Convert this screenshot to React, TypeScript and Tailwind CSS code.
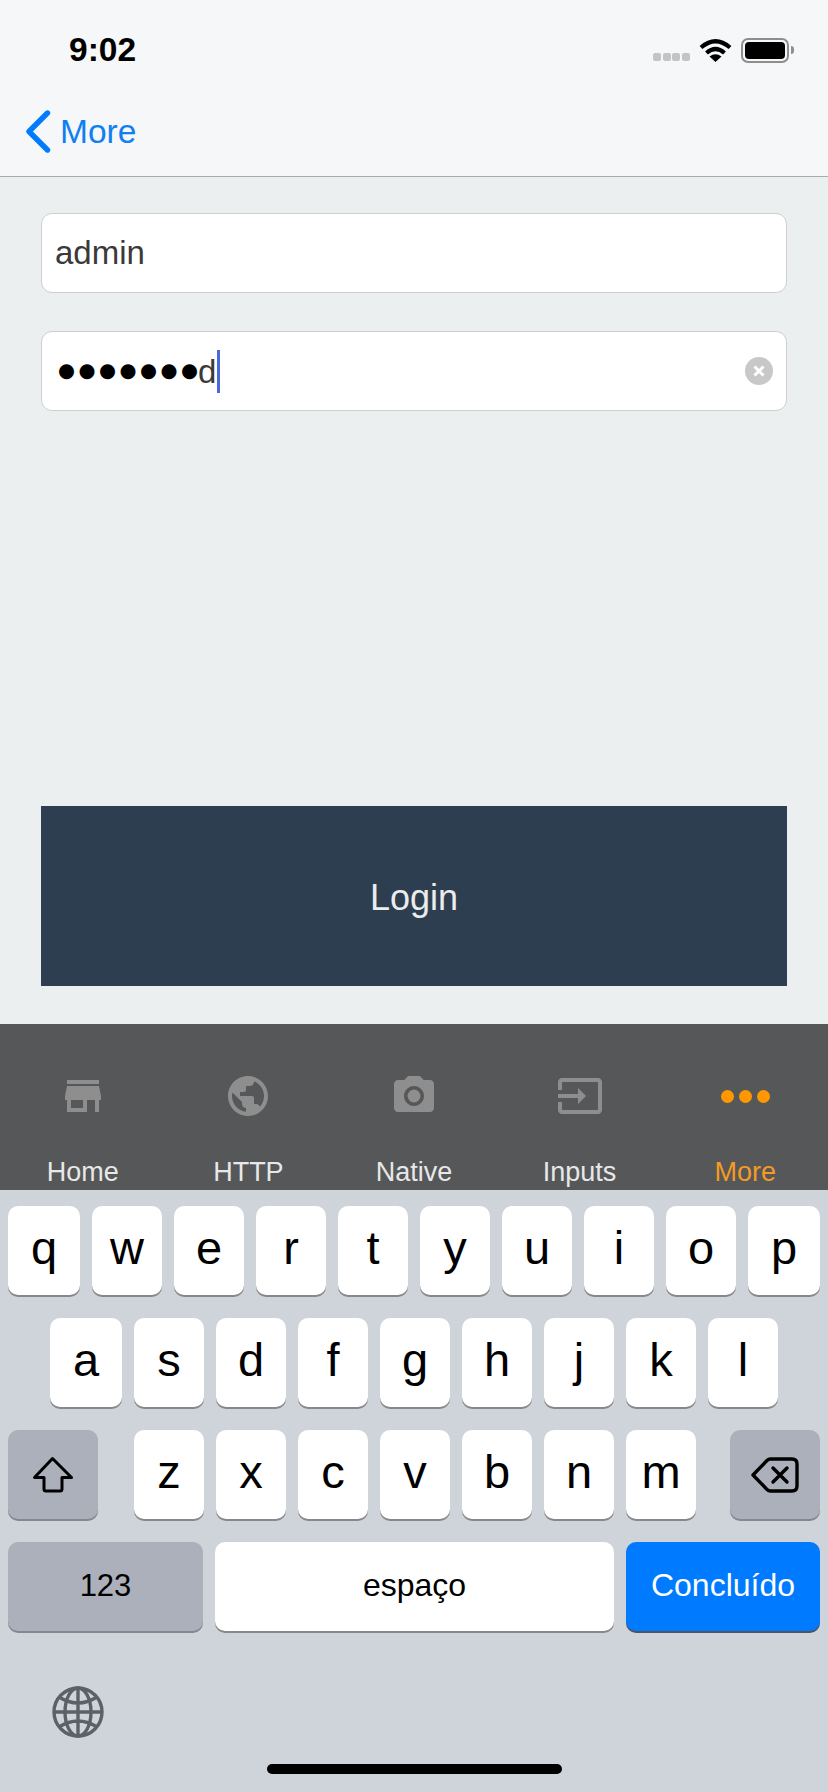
import React, { FC } from "react";

const ROW_ONE = ["w", "e", "r", "t", "y", "u", "i", "o"];
const ROW_TWO = ["s", "d", "f", "g", "h", "j", "k", "l"];
const ROW_THREE = ["z", "x", "c", "v", "b", "n", "m"];

const TABS = [
  {
    label: "Home",
    path: "M20 4H4v2h16V4zm1 10v-2l-1-5H4l-1 5v2h1v6h10v-6h4v6h2v-6h1zm-9 4H6v-4h6v4z",
  },
  {
    label: "HTTP",
    path: "M12 2C6.48 2 2 6.48 2 12s4.48 10 10 10 10-4.48 10-10S17.52 2 12 2zm-1 17.93c-3.95-.49-7-3.85-7-7.93 0-.62.08-1.21.21-1.79L9 15v1c0 1.1.9 2 2 2v1.93zm6.9-2.54c-.26-.81-1-1.39-1.9-1.39h-1v-3c0-.55-.45-1-1-1H8v-2h2c.55 0 1-.45 1-1V7h2c1.1 0 2-.9 2-2v-.41c2.93 1.19 5 4.06 5 7.41 0 2.08-.8 3.97-2.1 5.39z",
  },
  {
    label: "Native",
    path: "M9 2L7.17 4H4c-1.1 0-2 .9-2 2v12c0 1.1.9 2 2 2h16c1.1 0 2-.9 2-2V6c0-1.1-.9-2-2-2h-3.17L15 2H9zm3 15c-2.76 0-5-2.24-5-5s2.24-5 5-5 5 2.24 5 5-2.24 5-5 5zm0-8.2a3.2 3.2 0 1 0 0 6.4 3.2 3.2 0 0 0 0-6.4z",
  },
  {
    label: "Inputs",
    path: "M21 3.01H3c-1.1 0-2 .9-2 2V9h2V4.99h18v14.03H3V15H1v4.01c0 1.1.9 1.98 2 1.98h18c1.1 0 2-.88 2-1.98v-14c0-1.11-.9-2-2-2zM11 16l4-4-4-4v3H1v2h10v3z",
  },
];

const StatusBar = () => (
  <div className="h-[88px] flex items-center justify-between pl-[69px] pr-[34px] pt-[12px]">
    <span className="text-[33.5px] leading-none font-bold text-black">9:02</span>
    <div className="flex items-center">
      <div className="flex gap-[1.6px] mt-[14px] mr-[9px]">
        <div className="w-[8px] h-[8px] rounded-[2px] bg-[#c4c4c6]"></div>
        <div className="w-[8px] h-[8px] rounded-[2px] bg-[#c4c4c6]"></div>
        <div className="w-[8px] h-[8px] rounded-[2px] bg-[#c4c4c6]"></div>
        <div className="w-[8px] h-[8px] rounded-[2px] bg-[#c4c4c6]"></div>
      </div>
      <svg width="33" height="24" viewBox="0 0 33 24" className="mr-[9px]">
        <path d="M2 9.5Q16.5-3 31 9.5" fill="none" stroke="#000" strokeWidth="4.2" />
        <path d="M7.5 15Q16.5 7 25.5 15" fill="none" stroke="#000" strokeWidth="4.2" />
        <path d="M16.5 24L10.5 18.5Q16.5 14 22.5 18.5Z" fill="#000" />
      </svg>
      <div className="w-[48px] h-[25px] rounded-[7px] border-2 border-[#8e8e90] p-[2px]">
        <div className="w-full h-full rounded-[4px] bg-black"></div>
      </div>
      <div className="w-[3px] h-[8px] ml-[2px] rounded-r-full bg-[#8e8e90]"></div>
    </div>
  </div>
);

const NavBar = () => (
  <div className="h-[89px] flex items-start pl-[25px] pt-[22px] border-b border-[#a9abac]">
    <svg width="26" height="43" viewBox="0 0 26 43">
      <path
        d="M22.5 3L4 21.5 22.5 40"
        fill="none"
        stroke="#007aff"
        strokeWidth="5.4"
        strokeLinecap="round"
        strokeLinejoin="round"
      />
    </svg>
    <span className="ml-[9px] mt-[4px] text-[33.5px] leading-[36px] text-[#107fef]">More</span>
  </div>
);

const LoginForm = () => (
  <div className="flex-1 flex flex-col bg-[#ebeff0] px-[41px] pt-[36px] pb-[38px]">
    <div className="h-[80px] flex items-center pl-[13px] rounded-[11px] border border-[#cdcfd0] bg-white">
      <span className="text-[33px] leading-none text-[#3a3a3a] mb-[2px]">admin</span>
    </div>
    <div className="h-[80px] mt-[38px] flex items-center pl-[16px] pr-[13px] rounded-[11px] border border-[#cdcfd0] bg-white">
      <span className="text-[19.5px] leading-none text-black font-['DejaVu_Sans',sans-serif]">
        <span className="tracking-[3.5px]">●●●●●●</span>●
      </span>
      <span className="text-[33px] leading-none text-[#3a3a3a] mt-[1px]">d</span>
      <div className="w-[3px] h-[43px] ml-[1px] mt-[1px] bg-[#4a68d8]"></div>
      <div className="ml-auto w-[28px] h-[28px] rounded-full bg-[#c8c8c8] flex items-center justify-center">
        <svg width="14" height="14" viewBox="0 0 14 14">
          <path d="M2.5 2.5L11.5 11.5M11.5 2.5L2.5 11.5" stroke="#fff" strokeWidth="3" />
        </svg>
      </div>
    </div>
    <button className="mt-auto h-[180px] flex items-center justify-center pt-[3px] bg-[#2c3e50] text-[36px] leading-none text-[#ececec]">
      Login
    </button>
  </div>
);

const TabBar = () => (
  <div className="h-[166px] overflow-hidden flex bg-[#555759] pt-[48px]">
    {TABS.map((tab) => (
      <div key={tab.label} className="flex-1 flex flex-col items-center">
        <svg width="48" height="48" viewBox="0 0 24 24" fill="#8e8e8e" fillRule="evenodd">
          <path d={tab.path} />
        </svg>
        <span className="mt-[36px] text-[27px] leading-[32px] text-[#e8e8e8]">{tab.label}</span>
      </div>
    ))}
    <div className="flex-1 flex flex-col items-center">
      <div className="h-[48px] flex items-center gap-[5px]">
        <div className="w-[13px] h-[13px] rounded-full bg-[#ff9800]"></div>
        <div className="w-[13px] h-[13px] rounded-full bg-[#ff9800]"></div>
        <div className="w-[13px] h-[13px] rounded-full bg-[#ff9800]"></div>
      </div>
      <span className="mt-[36px] text-[27px] leading-[32px] text-[#f59a24]">More</span>
    </div>
  </div>
);

const Key: FC<{ label: string; width: string }> = ({ label, width }) => (
  <div
    className={
      "h-[89px] flex items-center justify-center pb-[6px] rounded-[10px] bg-white shadow-[0_2px_0_#87888c] text-[47px] leading-none text-black " +
      width
    }
  >
    {label}
  </div>
);

const Keyboard = () => (
  <div className="flex-1 flex flex-col bg-[#cfd3da] pt-[16px]">
    <div className="flex gap-[12px] px-[8px]">
      <Key label="q" width="w-[72px]" />
      {ROW_ONE.map((letter) => (
        <Key key={letter} label={letter} width="w-[70px]" />
      ))}
      <Key label="p" width="w-[72px]" />
    </div>
    <div className="flex gap-[12px] pl-[50px] mt-[23px]">
      <Key label="a" width="w-[72px]" />
      {ROW_TWO.map((letter) => (
        <Key key={letter} label={letter} width="w-[70px]" />
      ))}
    </div>
    <div className="flex px-[8px] mt-[23px]">
      <div className="w-[90px] h-[89px] flex items-center justify-center rounded-[10px] bg-[#abb0bb] shadow-[0_2px_0_#87888c]">
        <svg width="42" height="38" viewBox="0 0 42 38">
          <path
            d="M20.5 2.5L2.5 21.5H12V33Q12 35 14 35H28Q30 35 30 33V21.5H39.5Z"
            fill="none"
            stroke="#000"
            strokeWidth="3"
            strokeLinejoin="round"
          />
        </svg>
      </div>
      <div className="flex gap-[12px] ml-[36px]">
        {ROW_THREE.map((letter) => (
          <Key key={letter} label={letter} width="w-[70px]" />
        ))}
      </div>
      <div className="w-[90px] h-[89px] ml-auto flex items-center justify-center rounded-[10px] bg-[#abb0bb] shadow-[0_2px_0_#87888c]">
        <svg width="48" height="36" viewBox="0 0 48 36">
          <path
            d="M2 18L16 3.5Q17.5 2 19.5 2H41Q46 2 46 7V29Q46 34 41 34H19.5Q17.5 34 16 32.5Z"
            fill="none"
            stroke="#000"
            strokeWidth="3.4"
            strokeLinejoin="round"
          />
          <path d="M22 11L36 25M36 11L22 25" stroke="#000" strokeWidth="3.4" strokeLinecap="round" />
        </svg>
      </div>
    </div>
    <div className="flex gap-[12px] px-[8px] mt-[23px]">
      <div className="w-[195px] h-[89px] flex items-center justify-center pb-[2px] rounded-[10px] bg-[#abb0bb] shadow-[0_2px_0_#87888c] text-[31px] leading-none text-black">
        123
      </div>
      <div className="flex-1 h-[89px] flex items-center justify-center pb-[4px] rounded-[10px] bg-white shadow-[0_2px_0_#87888c] text-[32px] leading-none text-black">
        espaço
      </div>
      <div className="w-[194px] h-[89px] flex items-center justify-center pb-[4px] rounded-[10px] bg-[#007aff] shadow-[0_2px_0_#4c5566] text-[32px] leading-none text-white">
        Concluído
      </div>
    </div>
    <div className="pl-[52px] pt-[55px]">
      <svg width="52" height="52" viewBox="0 0 52 52" fill="none" stroke="#5c6068" strokeWidth="3.4">
        <circle cx="26" cy="26" r="24" />
        <ellipse cx="26" cy="26" rx="13" ry="24" />
        <path d="M26 2V50M2 26H50M7 11Q26 23 45 11M7 41Q26 29 45 41" />
      </svg>
    </div>
    <div className="w-[295px] h-[10px] mx-auto mt-[26px] rounded-full bg-black"></div>
  </div>
);

const App = () => {
  return (
    <div className="w-[828px] h-[1792px] overflow-hidden flex flex-col font-['Liberation_Sans',sans-serif]">
      <div className="bg-[#f6f7f9]">
        <StatusBar />
        <NavBar />
      </div>
      <LoginForm />
      <TabBar />
      <div className="h-[602px] flex">
        <Keyboard />
      </div>
    </div>
  );
};

export default App;
